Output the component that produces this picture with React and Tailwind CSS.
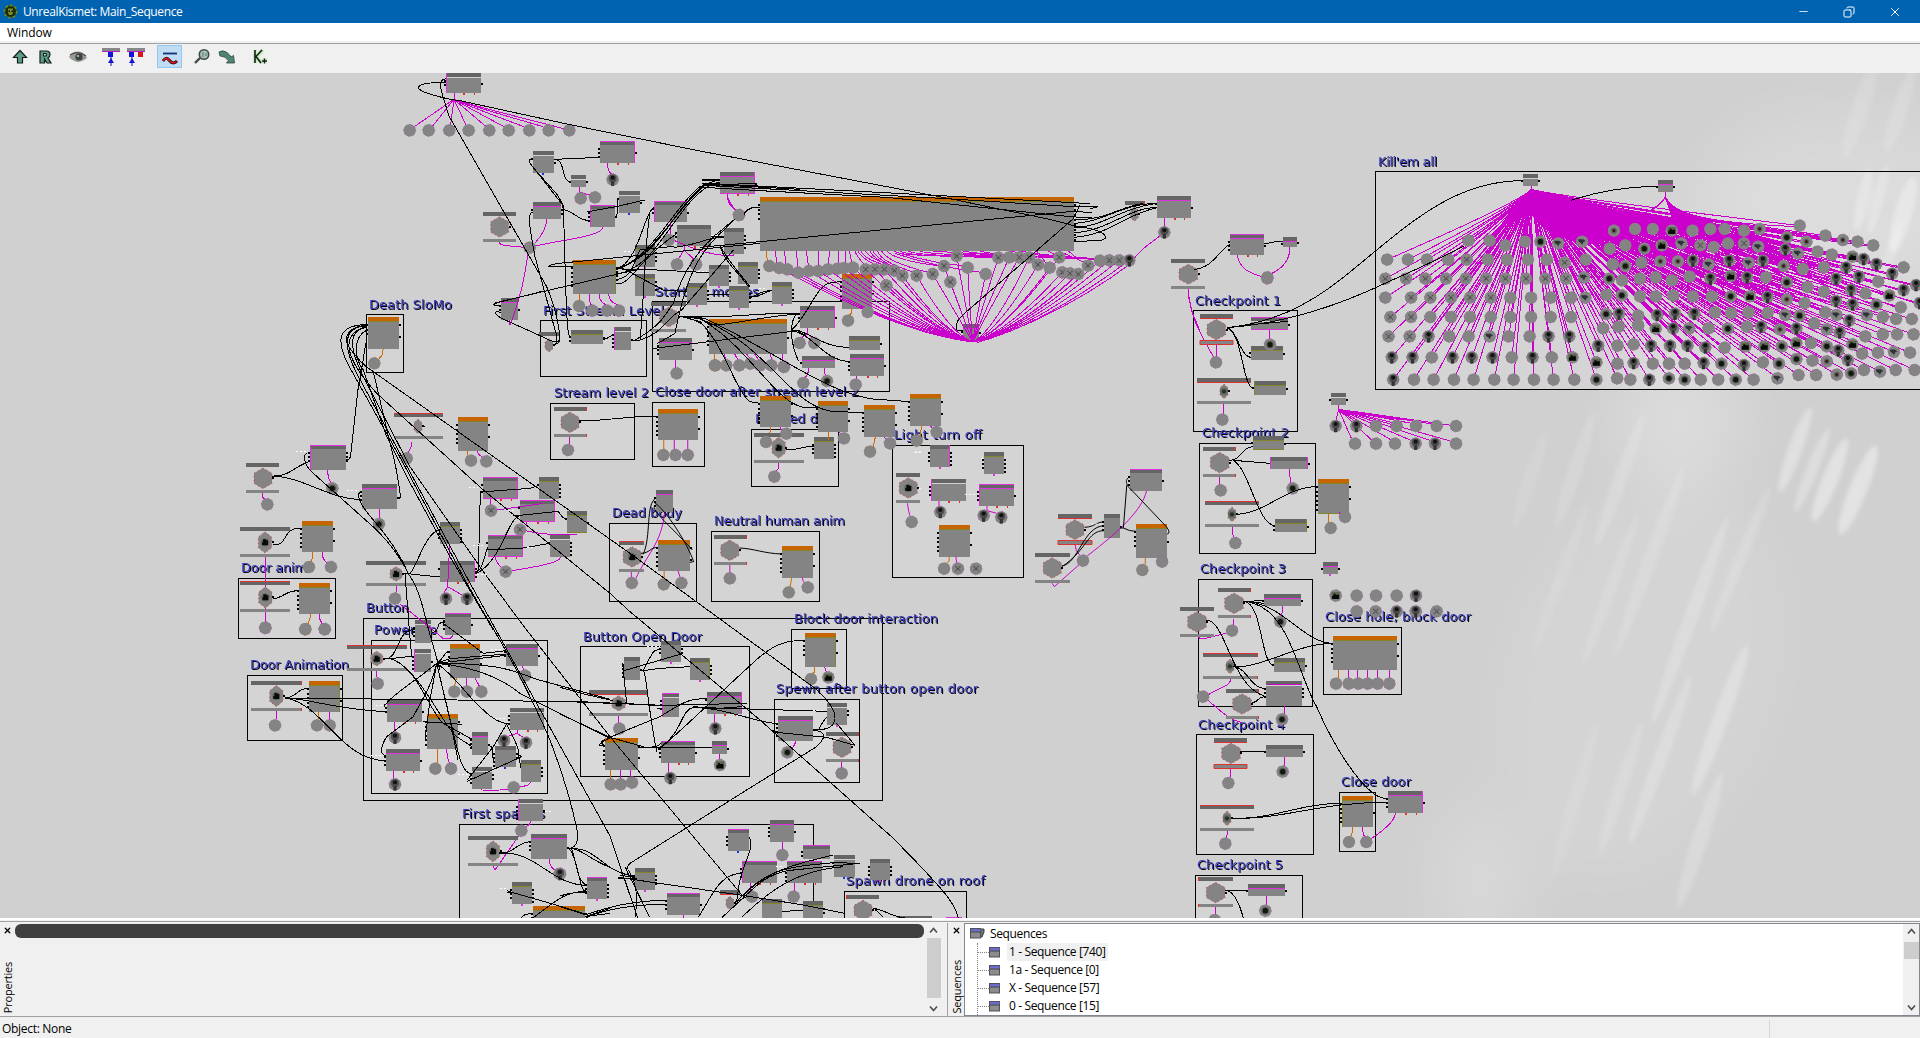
import React from "react";
import { Minus, X, Copy } from "lucide-react";

// Every section of the graph keeps its own origin (o) and units per pixel (k).
// nodes:   kind x1 y1 x2 y2 leftPorts rightPorts flags
// events:  barX1 barX2 topBarY hexX hexY hexW hexH bottomBarY flags
// dots:    x,y followed by an optional picture letter
const SECTIONS = [
  {
    o: [380, 70], k: [3, 3],
    boxes: "481 751 799 919;817 695 1529 964",
    nodes: `w 198 9 303 69 2 1 Lr;d 660 213 765 279 3 1 TRr;w 459 243 522 309 1 1 b;w 573 315 618 351 1 1;w 717 363 780 430 1 1 b;m 459 396 543 446 1 2;d 630 405 705 471 3 1 TL;d 822 393 921 456 2 1 TL;m 1020 306 1125 372 0 1 RBr;d 891 465 993 528 2 0 r;d 1032 474 1092 552 0 4;y 765 525 825 591 0 3 p;y 765 612 825 678 0 3 p;d 987 585 1047 648 0 3 p;y 1074 576 1134 642 0 3 p;y 921 639 981 705 0 3 p;y 1047 648 1107 714 0 3 p;y 1176 636 1236 702 0 3 p;o 579 570 708 672 5 4 R;m 363 684 414 750 2 1;y 573 780 669 822 2 1;w 702 771 753 840 4 1 L;m 837 804 936 870 3 1;o 987 747 1221 852 5 1`,
    events: `309 408 426 359 471 54 62 507 s;477 537 786 507 826 24 40 0 s;813 918 696 866 741 54 60 778 s`,
    dots: `89,181 146,181 208,181 266,181 328,181 386,181 448,181 506,181 568,181 602,385 645,382 698,329k 449,533 1077,435 866,510 891,583 948,583 597,708o 637,722 681,722 717,722 890,910 1005,886o 1039,886 1078,886 1111,881 1140,886 1174,886 1211,890`,
    pink: `M222 69V90M222 88L103 170M222 88L158 168M222 88L212 164M222 88L258 165M222 88L316 168M222 88Q260 110 372 170M222 88Q270 110 432 170M222 88Q280 110 490 170M222 88Q290 110 552 176M597 351V366L602 372M597 366L632 376M682 279Q682 302 694 312M500 447Q500 480 466 518M668 471C668 500 540 510 466 528M358 516C358 530 390 526 432 532M444 550C435 620 415 700 396 750L390 766L388 750M1042 372Q1042 405 1066 420M872 456V494M912 528V540L896 566M912 540L942 568M884 512C960 545 1000 556 1060 558V552M628 672Q628 700 634 705M658 672C656 695 672 700 678 705M686 672C688 700 708 700 714 706M886 870V894M1032 852L1038 870M1064 852L1074 870M1100 852L1110 866M1124 852L1136 870M1172 852L1174 870M1206 852V874`,
    orange: `M597 672V692M1004 852V870`,
    wires: `M198 37C110 37 90 54 150 72Q200 88 240 92L570 164L960 243M198 26C170 28 182 62 208 140L500 650C530 720 545 800 536 818L520 824M522 268L660 262M522 268C560 268 540 335 573 335M459 266C440 266 448 280 470 305L548 405C555 440 555 760 566 790Q568 804 573 804M459 292L530 372Q560 420 548 418M543 418C580 418 590 452 630 452M620 426L717 408L794 390M705 440C720 440 705 385 717 385M459 426C440 426 450 480 465 560L528 790Q535 820 524 824M414 708M363 708C330 708 335 700 365 694L765 600M363 728C335 718 345 738 380 752L500 806Q530 822 540 810M508 588C510 580 560 578 600 574L1140 520M505 588L579 588M708 596C760 600 770 595 830 600L987 608M708 596C840 560 870 430 970 345L1020 328M708 600C820 560 890 400 960 350L1020 336M720 596C830 550 900 400 975 346L1125 340M708 612C830 600 880 410 990 345L1020 348M708 628C760 628 765 560 780 540L870 530L891 532M708 642C760 642 760 580 891 490M708 600C780 570 790 430 822 412M720 590L850 660L921 665M753 812L780 810C790 730 795 500 810 430M780 810C850 790 850 750 905 720L1060 540M766 810C850 760 850 740 880 700Q920 560 1030 476L1060 450M669 808C690 808 685 795 702 795M993 500L1032 500M891 530C960 525 980 500 1032 502M1092 435Q1100 411 1140 411M1065 448C980 530 930 560 885 790L830 822M981 674L1047 674M1107 682C1150 680 1150 664 1176 662M1020 525C1040 570 1080 610 1110 650M900 738C950 750 980 760 987 796M815 836L1221 786L1260 780M966 330H1020M970 342L1260 358`,
    ghost: `M732 545h20M996 497h20M955 603h26M1138 655h18`,
  },
  {
    o: [700, 140], k: [3, 3],
    nodes: `o 180 171 1122 333 4 8;o 426 402 516 507 5 2;m 300 498 405 564 2 1 Rr;y 447 588 540 630 0 1;m 450 642 552 708 3 1 r;m 306 648 405 684 1 0;o 180 768 273 861 5 2;o 354 783 444 876 5 2;o 492 795 585 891 5 2;o 630 762 723 858 5 2;m 1371 168 1473 234 1 1 r;m 788 552 836 600 1 1;y 342 891 402 957 3 4;d 690 915 750 981 3 4 Rp;y 852 936 912 1002 3 4 p`,
    events: `162 312 879 236 923 40 64 961 k;1275 1335 183 1303 222 24 44 0 R;1413 1515 357 1465 403 56 60 438 s`,
    dots: `117,225 208,378o 238,384 262,388 295,398 327,393 355,393 384,388 413,386 432,384 459,383 497,388x 525,388x 553,388x 583,392x 607,407x 650,407x 698,402x 732,378x 770,348x 803,383 857,402 751,426x 559,436x 895,353x 928,352 958,352x 988,352x 1014,374x 1049,383 1078,352x 1087,397x 1110,400x 1135,402x 1164,377x 1200,362 1228,361x 1258,361x 1288,361k 1393,277k 444,542o 503,516 299,609 343,609 310,729 381,723t 467,734 198,906o 259,881 432,895 510,935o 570,910 650,902o 710,876 223,1010 45,676o 252,681`,
    pink: `M226 333L230 368M253 333L258 372M289 333L294 382M319 333L325 376M355 333L354 376M388 333L386 372M417 333L414 370M435 333L438 370M448 333L455 368M465 333Q470 350 492 372M474 333Q480 350 520 372M483 333Q490 355 550 374M497 333Q505 355 580 378M510 333Q520 360 600 392M520 333Q525 355 604 392M533 333Q540 365 640 396M545 333Q560 365 680 396M562 333Q580 360 720 378M583 333Q600 350 770 345M600 333Q620 350 900 352M625 333Q640 348 950 352M660 333Q680 345 990 350M585 340Q700 380 850 398M600 340Q700 370 800 378M730 333Q760 346 1010 352M790 333Q850 346 1080 350M840 333Q900 350 1200 358M700 333Q850 345 1220 358M930 333Q1000 350 1250 358M960 333Q1060 352 1288 360M1010 333L1040 372M1045 333L1078 352M1076 333L1160 370M1105 333L1130 354L1200 360M82 162Q84 185 105 208M1393 234V262M1380 288C1320 330 1310 345 1290 372C1120 500 930 580 830 608M322 564V580L304 594M322 580L338 594M326 684Q326 704 314 714M372 684L376 708M470 708V718M240 861Q242 872 250 876M416 876L424 882M552 891L560 900M692 858L700 870M235 966V986L226 996M1464 446Q1465 500 1500 572`,
    orange: `M198 333L202 362M453 507V520L447 526M212 861L208 890M385 876V900M526 891L520 920M665 858L660 888`,
    wires: `M0 33L770 180C950 220 1080 240 1122 258C1230 270 1240 305 1180 302L1122 305M6 118L60 120M6 130L60 132L1120 188L1170 191M10 136L740 176L1120 200L1195 200L1170 206M10 142L180 152L560 172L1110 230L1176 234M0 322L180 305L1120 214L1176 218M1140 196L1120 236L810 506C775 535 765 545 770 570L788 572M1122 250C1200 250 1270 190 1371 190M1122 264C1210 260 1260 205 1371 190M1122 278C1220 275 1290 200 1371 203M1122 292C1230 285 1270 225 1371 203M1122 240C1220 240 1260 200 1330 190M132 220C145 202 160 202 180 202M147 470C180 470 170 452 216 452M60 318C75 370 120 400 145 440M-65 528L80 529L230 520L300 520M-55 528L0 533Q30 560 60 554C140 545 220 525 300 522M275 570C330 520 350 430 395 428L426 424M275 570C330 570 360 622 447 622M275 572C340 580 370 664 450 664M290 520C260 560 280 630 296 664M275 572C300 580 310 575 322 595M-55 528C-20 530 0 530 20 538C240 640 400 780 560 780L630 785M-55 529C-20 530 0 534 20 545C220 630 280 820 420 815L492 818M-55 530L0 536C150 620 230 800 320 803L354 804M-55 530L0 545C70 610 110 760 150 785L180 790M257 930C300 930 310 918 342 918`,
    ghost: `M32 287h26M176 446h18M645 936h18M843 956h10`,
  },
  {
    o: [1360, 150], k: [2.8, 3],
    boxes: "44 65 1620 718",
    nodes: `w 456 72 498 107 1 1;m 834 90 876 125 1 1`,
    dots: `304,272 363,272 407,286 462,275 505,275t 555,280g 622,275g 711,242s 770,237 820,237 873,242b 931,242 981,237 1021,237 1075,242 1119,237s 1231,227 1195,262t 1250,275s 1303,257 1352,270s 1393,275 1437,286 699,296 743,286 796,296t 845,286b 900,280g 953,286x 990,291 1030,280 1075,280x 1115,290g 1191,298k 1226,310g 1281,305 1321,314 1379,320b 1410,327k 1446,342k 1522,352 76,329 134,329 187,329 247,329 299,329x 358,329 412,329 470,329 523,329 573,338x 632,329 708,343 743,348t 788,338 841,334s 890,334s 932,332k 976,343g 1034,332k 1088,338g 1128,332k 1186,348s 1240,357 1299,352 1361,352k 1490,371k 71,386x 129,386x 183,386x 241,386x 296,386x 353,386x 407,386x 465,386x 519,386x 577,386x 627,382g 698,386t 734,391 784,386 828,382 873,391 923,380 981,386k 1038,378b 1084,382k 1137,382 1195,397t 1253,411 1333,386k 1397,380k 1451,395 1522,420k 1557,405k 71,443 143,443x 197,443x 255,443x 308,443x 366,443x 421,443 479,443 534,443 591,443 631,443g 690,434 733,436t 784,439 828,439 877,437 932,439 985,439 1038,439t 1092,439b 1141,441k 1195,448s 1245,459 1299,425 1375,420k 1415,430 1482,436b 1333,453k 1379,463k 1446,464t 1514,472 1567,459k 85,501x 143,501x 197,501 255,501 308,501 366,501 421,501 479,501 534,501 591,501 689,492t 725,491k 779,497 832,495k 882,491k 936,491k 994,487 1039,489 1088,487 1141,489 1191,495g 1231,497t 1303,487 1334,495g 1370,511k 1419,495g 1464,501 1501,507 1545,507 80,559x 139,559x 192,559k 250,559 304,559 363,559g 416,559 475,559 528,559k 586,559k 681,535 724,530 779,526 828,536b 877,535k 922,535g 976,535 1030,536t 1083,530 1123,530k 1176,538s 1222,535k 1272,520 1307,538g 1343,547k 1415,559 1464,553 1504,553 1550,553 89,622k 147,622k 201,622 259,622k 313,622k 371,622k 425,622 483,622k 537,622 595,622b 667,587k 721,587 766,583 815,587k 868,587k 917,587k 967,592k 1021,593 1079,589b 1132,589b 1181,589t 1222,579b 1263,579 1307,589t 1339,601k 1379,583b 1406,611 1450,608 1495,606g 1540,608 662,637b 721,641 766,639k 820,641 865,641 909,641 962,639k 1012,641t 1075,645k 1128,637 1173,641t 1222,627t 1267,632 1307,634s 1366,630k 1411,660 1456,665g 1500,660 1553,660 93,689k 151,689 206,689 263,689 318,689 376,689 430,689 487,689 542,689 600,689 662,689t 720,685 757,689 810,689k 865,685t 909,689t 954,689 1003,689 1052,689t 1102,689 1169,685g 1228,675 1277,675 1335,674s 1375,670t`,
    fan: [480, 118],
    pink: `M479 107V125M854 125V150M855 140Q845 165 800 188M855 140Q845 160 815 184M855 140Q870 175 945 208M857 145Q880 180 910 205M700 190L1000 225L1190 290M870 200L1300 400M870 200L1400 420M870 200L1500 440M870 200L1200 320M870 200L1250 460M870 200L1350 350M700 230L980 380L1200 440M680 200L1050 340L1380 400M860 200L1100 400L1400 480M860 200L1030 400L1300 470M680 230L960 330L1330 430M690 235L990 350L1330 460M700 240L1000 360L1300 480M700 245L1040 390L1230 470M950 340L1200 410M960 350L1220 425M980 370L1230 445`,
    wires: `M-373 533C-250 520 -150 470 -50 385C120 240 250 92 456 92M-373 533C-200 520 -50 460 60 405C130 370 200 340 290 288M590 151C680 120 760 109 834 109`,
  },
  {
    o: [230, 290], k: [3, 3],
    boxes: "409 73 521 247;25 865 317 1045;401 985 1958 1531;961 340 1214 508",
    nodes: `o 414 81 507 177 3 2;o 684 381 774 483 5 2;d 240 465 348 540 3 3 TL;m 396 582 501 657 3 1;d 759 561 864 627 1 0 TRBr;y 927 561 987 627 1 4;d 870 630 975 696 1 0 TRBr;y 1011 663 1071 729 1 1 B;d 774 735 879 801 1 0 TRBr;w 960 735 1020 801 1 4 l;y 630 696 690 762 3 4;d 630 813 735 876 1 3 Rr;o 216 693 309 786 5 2;o 207 879 300 972 5 2;w 555 990 603 1059 3 0;d 645 969 723 1035 3 1 T`,
    events: `48 147 519 99 565 54 62 600 s;30 180 711 105 757 40 64 792 k;30 180 873 106 922 40 64 957 kT;408 588 813 498 852 36 44 879 ks;492 639 369 564 409 24 44 438 sT;972 1071 351 1020 397 54 62 432 S`,
    dots: `433,220o 307,595t 112,643 447,702t 530,505 723,512o 769,514 783,662x 870,719x 827,845x 495,926 648,926k 711,926k 237,831o 303,831 226,1018o 106,1014 284,1018 1014,480`,
    pink: `M293 540Q293 562 302 578M97 609V620L106 630M448 657V684M544 456V470L534 488M742 483Q745 496 756 500M781 627V644M800 660L940 640M890 696V706M886 722C940 735 1010 735 1042 733M795 801Q800 820 815 832M845 842C920 830 985 820 992 802M659 762L653 890L642 908M653 890Q680 905 700 918M498 888V905L495 912M276 786Q276 810 294 820M105 800V1000M267 972Q268 990 278 1004M1018 440V462M510 942C560 980 610 1020 640 1046Q665 1050 668 1035`,
    orange: `M459 177Q460 195 447 206M711 483V496M248 786V800L243 816M240 972V985L234 1002`,
    wires: `M411 104C310 104 325 165 355 225L520 520L705 870C800 1040 860 1120 960 1350Q1020 1510 1043 1630Q1045 1676 1012 1676M411 108C335 110 340 170 380 250L715 870L1140 1638L1235 1920M411 112C350 120 360 180 400 260L540 530L778 870L890 1020L1140 1340L1540 1820M411 106C345 110 340 150 360 175Q390 220 430 245L1200 790L1755 1195C1840 1270 1830 1320 1755 1320M411 110C330 130 340 200 440 310L760 600L1140 910L1200 965L1590 1290L1990 1645C2120 1780 2200 1850 2187 1920M411 120C370 140 370 200 400 240L470 440L530 560L660 800L790 1020M411 150C400 180 400 230 385 290L362 495Q360 510 348 510M430 245L480 460Q500 530 512 622Q508 626 501 626M126 558C180 560 190 530 240 514M126 558C220 560 300 630 396 628M240 488C210 486 225 530 250 550L440 720Q500 780 535 850M396 606C370 606 395 650 430 690Q500 770 535 850M130 765C180 765 150 714 216 714M130 926C160 926 160 902 207 902M518 851H540C560 830 590 720 630 720M535 851C570 855 600 860 630 859M525 850L538 1020L545 1100M535 851C570 900 580 960 596 1020L630 1140M735 846L745 840L751 606H759M740 848C765 830 765 780 774 770M745 848C820 800 830 690 870 676M751 606L900 595L927 586M850 678L985 664Q1000 690 1011 686M770 780L880 774L960 760M1048 392L1110 390L1214 381L1284 379M791 44C800 35 820 35 940 3M578 408H584`,
    ghost: `M198 485h30M350 600h36M717 592h28M875 597h16M835 660h24M730 767h36M890 772h22M740 854h36`,
  },
  {
    o: [230, 580], k: [3, 3],
    boxes: "424 181 953 640;52 287 338 482;688 733 1750 1200;1051 199 1559 590",
    nodes: `w 552 207 603 276 4 1 L;o 660 192 750 294 4 2;m 828 192 924 258 2 1;o 237 303 330 396 5 2 R;m 471 360 576 426 2 1 r;m 468 507 570 573 3 1 r;o 591 402 684 507 6 2;m 726 456 774 525 3 1;d 795 498 858 561 4 2 b;w 840 384 942 450 3 0 r;w 726 561 786 627 3 2;y 873 540 933 606 0 3;w 864 657 939 723 4 1 L;m 903 762 1011 837 3 1;y 846 906 906 972 3 4 p;d 1071 891 1131 957 3 4 Tp;o 909 978 1065 1040 2 2`,
    events: `351 531 195 440 236 36 44 264 kT;63 216 303 139 348 40 64 384 kr;714 864 768 789 814 40 64 849 k`,
    dots: `443,311 673,335o 711,335 754,335 885,287 261,436o 299,436 135,436 495,473k 495,613k 616,566o 663,566 822,482k 888,488k 851,622 874,752 989,881t 226,147o 106,143 284,147`,
    pink: `M440 272V288L443 294M710 294V318M735 294L748 318M876 258L882 270M297 396V420M139 392V418M493 426V456M490 573V596M650 507Q652 540 658 548M861 450V460L830 470M861 460L880 472M902 606Q900 618 868 620M752 627Q755 635 835 628M902 723Q900 735 888 740M866 768L795 870L789 858M957 837Q957 860 975 870`,
    orange: `M679 294L674 318M265 396V418M621 507V548`,
    wires: `M165 354C200 354 200 324 237 324M165 354L680 360L1140 367M165 354C230 354 320 390 471 395M165 354C280 370 330 542 468 542M458 235H490L552 228M475 235C510 220 500 150 555 148M475 235C560 250 600 400 640 430L726 478M475 235C560 250 640 440 680 470L726 500M603 160C640 150 610 125 645 128M640 130L760 220L828 212M620 250L660 236L828 222M620 250L828 226M620 250C650 230 640 214 660 214M620 250C560 300 480 350 470 370Q455 380 471 383M620 250C600 330 580 350 550 410L470 470Q440 520 468 528M620 250L600 360L585 480M620 250C800 250 850 270 920 298L1140 358M620 250C740 260 820 300 870 340L1140 475M620 250C680 290 720 360 760 390Q800 430 840 432M620 250L680 500C690 540 700 580 726 582M620 250L660 420L684 540M580 425L695 433M830 432L790 500L712 600M830 432C850 480 870 500 866 530L873 565M774 498C800 490 780 545 795 545M858 520L875 530L720 600L712 604M808 818C850 825 860 785 903 785M808 820C920 810 960 915 1071 916M1011 806C1050 800 1080 840 1140 862M1018 806C1040 830 1045 900 1060 930L1071 935M906 1015C960 980 1000 930 1071 935M830 932C850 940 920 955 1075 1005M1065 1010L1140 985M1065 1010L1140 1000M870 1018Q880 1000 909 1000M846 938H830M1120 495C1108 485 1120 480 1126 478`,
    ghost: `M615 210h36M783 208h30M438 375h20M424 525h32M683 582h32M795 414h36M810 925h18M945 695h22`,
  },
  {
    o: [560, 600], k: [3, 3],
    boxes: "695 88 860 264;643 298 899 547;853 875 1220 1120",
    nodes: `o 735 99 828 201 4 2 R;d 303 123 363 186 2 2 p;d 192 171 240 240 4 1;y 390 174 450 240 0 3 Rp;w 306 279 357 351 3 0 TL;m 441 276 546 342 1 0 Rr;o 135 414 234 510 5 2;d 303 423 405 489 3 1 Tr;m 456 423 501 462 0 1;m 654 348 759 423 4 1;w 801 309 861 375 0 2 p;m 630 660 702 726 3 1;d 504 687 567 753 3 0 Tb;d 546 783 651 849 3 0 TLr;d 681 783 786 849 4 0 Tr;d 729 735 810 777 2 0 T;w 822 765 885 831 2 0 b;d 930 777 990 840 3 3 p;y 225 804 285 870 3 3 p;d 321 879 420 945 3 1 T;y 606 897 666 960 0 0;y 729 903 789 960 0 2;d 1012 948 1116 970 0 0;d 1158 951 1206 970 0 0 T`,
    events: `87 264 270 176 310 40 46 339 kB;798 897 396 846 442 54 62 477 r;480 540 870 510 909 24 40 0 B;858 957 885 909 931 54 60 990 L`,
    dots: `753,237o 805,232b 178,386 466,385k 152,553o 182,553 216,548 331,534k 480,495b 682,457t 845,520 667,765 576,890 701,890 0,822k`,
    pink: `M175 348V370M464 342V370M181 510V538M213 510L212 532M326 489V518M478 462V480M706 423Q706 438 694 444M794 201L800 218M845 486V504M666 726V748M571 849V874M703 849V874M371 945V960`,
    orange: `M152 510V536M764 201V215L757 224`,
    wires: `M0 262C60 280 100 290 160 302M195 310L306 318M0 304L310 316L562 310M0 342L150 412L260 443H456M234 442C280 440 290 445 303 430M116 436C130 420 150 410 300 350C380 300 390 296 441 296M135 437H118M290 455C260 300 260 220 250 212L300 205L390 200M250 212C290 130 280 160 303 144M192 212L188 190L200 310M192 212L370 160H364M295 450C400 360 520 240 600 170C660 120 700 122 735 121M295 445C370 400 360 330 400 322L801 334M400 322C500 325 560 360 654 372M546 320C400 330 520 328 400 320M290 326H306M640 396L800 412L885 436M654 400L640 392M776 390C790 360 800 350 801 352M830 370L885 436M759 390C800 395 800 410 770 440L560 570L210 790Q190 810 210 830M21 746H35C110 740 130 820 225 828M35 746C50 790 50 840 81 858M0 888Q40 875 81 877M205 810Q240 860 225 950M195 800L268 950M175 832L560 888L730 915L853 940M180 826L225 832M175 834H230M320 900C200 905 150 920 75 945M320 912C200 915 140 930 80 950M0 920L90 948L75 955M567 712C590 740 540 800 535 870L530 905M415 952C460 880 480 820 546 820M486 952C580 870 600 830 681 812M525 908C600 840 620 810 820 765M530 905C620 800 700 800 822 788L900 790L681 812M545 952C640 860 720 810 850 800M560 890L530 905M666 935L729 930M938 925C980 930 990 950 1040 955M945 928L968 950`,
    ghost: `M262 140h38M345 195h34M636 366h14M760 330h36M648 800h18`,
  },
  {
    o: [540, 370], k: [2.3758, 3],
    boxes: "267 98 391 289;502 179 709 349;837 227 1149 622;165 461 372 694;408 485 664 694",
    nodes: `o 280 117 375 210 5 2;o 948 465 1022 560 5 2;o 280 510 356 603 5 2;o 575 528 649 623 5 2;m 276 360 316 426 3 0;w 929 327 1012 393 3 0 Lr;m 1043 342 1126 408 3 1 TLr;d 1402 297 1478 363 3 1 T;d 1340 432 1378 504 3 1;o 1416 462 1490 563 4 1`,
    events: `188 247 513 219 561 43 62 598 kT;413 491 495 451 541 43 62 577 r;846 903 309 875 354 43 62 391 ks;1231 1311 432 1271 479 43 60 514 A;1176 1259 549 1217 594 43 62 631 s`,
    dots: `293,255o 322,255 351,255 218,639 294,643o 336,639 451,625 591,667o 636,652 883,456 951,426k 1054,437k 1096,442k 960,596o 993,596x 1036,596x 1290,572 1431,600o 1478,575`,
    pink: `M319 210V240M351 210V240M217 606V624M328 603L334 626M451 585V610M623 623Q624 638 632 642M873 400Q876 430 880 440M948 393V410M1062 408V422L1085 430M988 560L990 580M1468 563L1474 566M296 426C290 520 250 560 228 625M1441 363C1430 420 1380 480 1300 558M1280 585L1222 650L1217 640M1271 523Q1272 545 1282 555`,
    orange: `M294 210V240M295 603V628M598 623L594 652M972 560V574L964 582M1438 563V584`,
    wires: `M240 550C260 550 262 532 280 532M245 553C265 500 250 400 276 384M276 405C255 410 310 470 340 510L362 540M270 396C300 420 350 520 365 575L356 577M474 534C510 536 530 550 575 552M1294 472C1320 470 1320 456 1340 456M1240 588C1280 580 1290 470 1340 467M1240 590C1300 540 1300 482 1340 482M1378 474H1386L1394 346M1386 474Q1400 484 1416 484M1402 320C1385 330 1395 350 1410 366L1488 470Q1500 490 1490 492M1402 346H1394`,
    ghost: `M890 246h14M900 356h8M1010 373h28M1310 462h28`,
  },
  {
    o: [1150, 280], k: [3, 3],
    boxes: "130 91 443 455;149 490 497 821;146 898 488 1278",
    nodes: `w 303 111 413 150 0 1 TB;y 303 198 399 240 1 1;y 312 303 408 345 1 1 L;y 309 468 402 510 1 1 B;d 360 531 474 567 0 1 LR;y 375 717 471 756 2 1 R;o 504 597 597 702 6 2 B;w 543 339 588 375 1 1;m 519 846 564 882 1 1 p;m 342 942 453 978 1 1`,
    events: `150 249 102 199 149 56 62 183 A;141 303 294 222 334 24 44 363 tB;159 258 501 209 548 56 62 582 S;165 327 663 246 703 24 44 732 tT;204 303 924 252 970 56 62 1005 r;90 192 981 141 1026 56 62 1062`,
    dots: `198,247 360,194t 217,419 212,631 428,625t 256,789 542,744o 585,711 557,438k 619,438k 678,438 740,438 798,438 860,438 918,438 615,491 678,491 735,491 797,491k 855,491k 918,491 557,947b 620,947 678,947 740,947 798,947k 352,-5t`,
    pink: `M199 192V230M359 150V176M221 372V402M209 590V614M417 567L422 608M246 740L250 772M566 697L576 704M566 375V395M566 388L557 424M566 388L612 422M566 388L604 475M566 388L665 480M566 388L670 424M566 388L724 480M566 388L728 428M566 388L785 482M566 388L784 430M566 388L842 482M566 388L846 432M566 388L904 484M566 388L904 436M566 392L760 420M114 28C125 120 140 140 190 230`,
    orange: `M534 702V728`,
    wires: `M230 143C260 145 270 230 303 232M230 143C280 160 275 320 312 326M230 143L303 134L413 124M238 541C275 541 275 500 309 500M250 541L360 550M250 541C300 570 320 730 375 738M258 703C350 700 400 622 504 619`,
  },
  {
    o: [1210, 225], k: [3, 3],
    nodes: `m 60 27 163 90 3 1 Tr;m 220 36 262 65 1 1`,
    dots: `172,157`,
    pink: `M82 90C90 140 130 145 158 156M240 66Q240 120 184 146`,
    wires: `M163 55C190 55 190 48 220 48M-48 133C10 130 30 70 60 58`,
  },
  {
    o: [1150, 540], k: [3, 3],
    boxes: "520 262 755 463;140 583 491 943;568 758 677 935;136 1006 458 1300",
    nodes: `o 549 288 741 390 5 2;y 372 354 465 396 1 1;w 348 423 456 498 3 3;d 348 615 459 651 1 1;o 576 768 669 861 5 1 L;m 714 753 819 819 3 1 Rr;m 294 1032 405 1068 1 1`,
    events: `159 324 339 240 379 24 44 408 tTr;228 327 447 276 492 56 62 528 r;192 291 594 243 640 56 62 675 AB;150 312 795 231 835 24 44 864 tT;144 249 1011 197 1058 56 62 1092 L`,
    dots: `391,245t 246,272 159,470 396,538t 235,729 398,695t 226,911 597,906o 649,906 558,431o 596,431 625,431 653,431 683,431 718,431 346,1112t 194,1140 620,214 677,214x 740,214k 797,214k 860,214x`,
    pink: `M397 198V216L392 228M250 236V254M145 290C150 305 180 290 228 280M242 418C242 440 190 450 175 465M175 482C220 520 240 540 275 548M402 498V522M240 684V712M402 651V678M231 872V885L228 894M349 1068V1094M196 1100V1122M736 820C735 845 690 880 662 896M638 861Q638 885 645 890M595 390V414M624 390L622 414M652 390V414M682 390V414M718 390V414M355 434H456`,
    orange: `M566 390L565 414M608 861V875L602 890`,
    wires: `M280 184L342 182M285 184L342 190M285 184C340 200 330 370 372 376M285 184C400 190 460 310 549 310M285 184C420 200 440 400 500 500C560 640 630 730 670 760Q690 776 714 776M168 240C230 240 240 440 348 470M250 380C340 385 440 310 549 310M250 380C290 380 300 446 348 446M302 490C330 485 320 470 348 470M270 634H348M244 836C380 836 450 790 576 790M244 836C420 836 500 787 714 787M225 1052H294M232 1052Q260 1060 280 1134`,
  },
];

const LABELS = [
  ["Kill'em all", 1378, 166, 59],
  ["Death SloMo", 369, 309, 83],
  ["First Stream Level", 543, 315, 121],
  ["Starting monies", 655, 296, 104],
  ["Stream level 2", 554, 397, 95],
  ["Close door after stream level 2", 655, 396, 204],
  ["Blocked door", 755, 423, 84],
  ["Light turn off", 894, 439, 88],
  ["Dead body", 612, 517, 70],
  ["Neutral human anim", 714, 525, 131],
  ["Door anim", 241, 572, 66],
  ["Button", 366, 612, 43],
  ["Power up", 374, 634, 63],
  ["Door Animation", 250, 669, 99],
  ["Button Open Door", 583, 641, 119],
  ["Block door interaction", 794, 623, 144],
  ["Spewn after button open door", 776, 693, 202],
  ["First spawns", 462, 818, 83],
  ["Spawn drone on roof", 846, 885, 139],
  ["Checkpoint 1", 1195, 305, 86],
  ["Checkpoint 2", 1202, 437, 87],
  ["Checkpoint 3", 1200, 573, 86],
  ["Checkpoint 4", 1198, 729, 87],
  ["Checkpoint 5", 1197, 869, 86],
  ["Close hole, block door", 1325, 621, 146],
  ["Close door", 1341, 786, 70],
];

const rows = (s) => (s ? s.trim().split(";").map((r) => r.trim().split(" ")) : []);
const R = Math.round;
const F = Math.floor;

function Node({ s, d }) {
  const [kind, a, b, c, e, l, r, flags = ""] = d;
  const px = (v) => R(s.o[0] + v / s.k[0]);
  const py = (v) => R(s.o[1] + v / s.k[1]);
  const x = px(+a), y = py(+b), w = px(+c) - x, h = py(+e) - y;
  const edge = kind === "y" || kind === "o" ? "#84842a" : "#e030e0";
  const div = { m: "#e030e0", y: "#84842a", w: "#d0d0d0", o: "#84842a" }[kind];
  const top = kind === "o" ? "#c66400" : "#656565";
  const ports = [];
  const sp = h > 29 ? 4.5 : 4;
  for (let i = 0; i < +l; i++) ports.push([x - 2, R(y + (h < 15 ? 6 : 7) + i * sp)]);
  for (let i = 0; i < +r; i++) {
    const step = kind === "o" && +r < 3 ? 12 : h > 40 ? 5 : 4;
    ports.push([x + w, R(y + (+r === 1 ? h / 2 : 7) + i * step)]);
  }
  return (
    <g>
      <rect x={x} y={y} width={w} height={h} fill="#848484" />
      <rect x={x} y={y} width={w} height={4} fill={top} />
      {div && <rect x={x} y={y + 4} width={w} height={1} fill={div} />}
      {flags.includes("T") && <rect x={x} y={y} width={w} height={1} fill={edge} />}
      {flags.includes("B") && <rect x={x} y={y + h - 1} width={w} height={1} fill={edge} />}
      {flags.includes("L") && <rect x={x} y={y} width={1} height={h} fill={edge} />}
      {flags.includes("R") && <rect x={x + w - 1} y={y} width={1} height={h} fill={edge} />}
      {ports.map((p, i) => (
        <rect key={i} x={p[0]} y={p[1]} width="2" height="2" fill="#000" />
      ))}
      {flags.includes("r") && <path d={`M${F(x + w / 2)} ${y + h}h2v2h-2zM${F(x + w * 0.8)} ${y + h}h1v2h-1z`} fill="#e03020" />}
      {flags.includes("b") && <rect x={F(x + w / 2) - 1} y={y + h} width="2" height="2" fill="#2030e0" />}
      {flags.includes("p") && <rect x={F(x + w / 2) - 1} y={y + h} width="2" height="2" fill="#e030e0" />}
    </g>
  );
}

function Event({ s, d }) {
  const f = d[8] || "";
  const px = (v) => R(s.o[0] + v / s.k[0]);
  const py = (v) => R(s.o[1] + v / s.k[1]);
  const x1 = px(+d[0]), x2 = px(+d[1]), ty = py(+d[2]);
  const cx = s.o[0] + d[3] / s.k[0], cy = s.o[1] + d[4] / s.k[1];
  const hw = d[5] / s.k[0] / 2, hh = d[6] / s.k[1] / 2;
  const by = +d[7] ? py(+d[7]) : 0;
  const red = "#e03030";
  const pts = [[0, -hh], [hw, -hh / 2], [hw, hh / 2], [0, hh], [-hw, hh / 2], [-hw, -hh / 2]]
    .map(([p, q]) => `${cx + p},${cy + q}`).join(" ");
  return (
    <g>
      <rect x={x1} y={ty} width={x2 - x1} height="4" fill="#656565" />
      {by > 0 && <rect x={x1} y={by} width={x2 - x1} height="3" fill="#848484" />}
      {f.includes("T") && <rect x={x1} y={ty} width={x2 - x1} height="1" fill={red} />}
      {(f.includes("A") || f.includes("B")) && <rect x={x1} y={ty + 4} width={x2 - x1} height="1" fill={red} />}
      {f.includes("A") && <path d={`M${x1} ${by - 0.5}H${x2}V${by + 3.5}H${x1}Z`} fill="none" stroke={red} />}
      {/[rRS]/.test(f) && <rect x={x2 - 1} y={ty} width="1" height="4" fill={red} />}
      {/[rS]/.test(f) && by > 0 && <rect x={x2 - 1} y={by} width="1" height="3" fill={red} />}
      {f.includes("L") && <path d={`M${x1} ${ty}h1v4h-1zM${x1} ${by}h1v3h-1z`} fill={red} />}
      <polygon points={pts} fill="#848484" stroke={red} strokeWidth="0.9" strokeDasharray="1 3" />
      {/[kt]/.test(f) && <circle cx={cx} cy={cy} r="4.2" fill="#686a66" />}
      {f.includes("k") && <path d={`M${cx - 3} ${cy}v3h6v-5h-2v-1h-3v3z`} fill="#080c06" />}
      {f.includes("t") && <circle cx={cx} cy={cy} r="2.2" fill="#2a3624" />}
      <rect x={R(cx + hw)} y={R(cy) - 1} width="2" height="2" fill="#000" />
    </g>
  );
}

function Dot({ x, y, t }) {
  const ring = t === "o" ? "#d87010" : "#e020e0";
  return (
    <g transform={`translate(${x} ${y})`}>
      <circle r="6.1" fill="#848484" stroke={ring} strokeWidth="0.8" strokeDasharray="0.8 3.99" />
      <circle r="5.9" fill="#848484" />
      {t === "x" && <path d="M-2.5 -2.5L2.5 2.5M2.5 -2.5L-2.5 2.5" stroke="#4c4c4c" strokeWidth="1.2" strokeDasharray="1.5 0.6" />}
      {t === "k" && (
        <>
          <circle cy="-1.2" r="4" fill="#4e4e4e" />
          <circle cy="-2" r="2.1" fill="#111" />
          <rect x="-1.6" y="1.8" width="3.2" height="4.4" fill="#333" />
        </>
      )}
      {t === "t" && (
        <>
          <circle r="3.8" fill="#5a5c58" />
          <circle r="2.6" fill="#10180e" />
        </>
      )}
      {t === "s" && <circle r="2.8" fill="#625c5a" />}
      {t === "s" && <circle r="1.4" fill="#2c1812" />}
      {t === "g" && <path d="M-4 -2.5H1L3.5 -0.5 1.5 0 0 3-1.5 1-3.5 0z" fill="#2c3238" />}
      {t === "b" && (
        <>
          <rect x="-4" y="-3.6" width="8" height="7" fill="#5c6450" />
          <path d="M-3.6 0h1.5v-2h2v1h3.5v4.4h-7z" fill="#060a04" />
        </>
      )}
    </g>
  );
}

const dotsOf = (s) =>
  s.dots.trim().split(/\s+/).map((t) => {
    const m = t.match(/^(-?[\d.]+),(-?[\d.]+)(\w?)$/);
    return [+m[1], +m[2], m[3]];
  });

// Wires that spread from the "Kill'em all" object lists.
const spray = (s) =>
  s.fan
    ? dotsOf(s).map(([x, y]) => {
        const [fx, fy] = s.fan;
        const cx = fx + (x - fx) * 0.1;
        const cy = fy + Math.min(70, (y - fy) * 0.2);
        const main = `M${fx} ${fy}Q${cx} ${cy} ${x} ${y}`;
        return x > 930 && y < 480 ? `${main}M858 150Q${880} 215 ${x - 6} ${y + 3}` : main;
      }).join("")
    : "";

// Wires that gather below the wide matinee.
const gather = dotsOf(SECTIONS[1]).slice(2, 39)
  .map(([x, y]) => `M${x} ${y}Q${x + (815 - x) * 0.62} ${y + (606 - y) * (Math.abs(x - 815) > 150 ? 0.88 : 0.6)} 818 606`)
  .join("");

function Wires({ s, d, color, dash }) {
  if (!d) return null;
  return (
    <g transform={`translate(${s.o[0]} ${s.o[1]}) scale(${1 / s.k[0]} ${1 / s.k[1]})`}>
      <path d={d} fill="none" stroke={color} strokeWidth="1" strokeDasharray={dash} vectorEffect="non-scaling-stroke" shapeRendering="crispEdges" />
    </g>
  );
}

// Soft scribbles of the backdrop: x, y, half width, half height, tilt, opacity.
const STREAKS = [
  [1530, 480, 7, 50, 18, 0.1], [1575, 470, 7, 60, 18, 0.14],
  [1620, 480, 7, 70, 20, 0.16], [1560, 580, 6, 80, 20, 0.1], [1610, 590, 6, 80, 20, 0.13],
  [1650, 560, 7, 100, 20, 0.15], [1690, 620, 7, 110, 20, 0.2], [1720, 720, 8, 80, 20, 0.26],
  [1740, 560, 6, 80, 22, 0.16], [1660, 760, 7, 90, 20, 0.2], [1620, 790, 7, 70, 18, 0.14],
  [1575, 800, 7, 80, 16, 0.1], [1795, 450, 7, 45, 20, 0.34], [1812, 470, 6, 45, 22, 0.28],
  [1830, 480, 8, 45, 22, 0.38], [1858, 490, 9, 48, 22, 0.4], [1700, 840, 8, 70, 18, 0.2],
  [1863, 200, 7, 32, 12, 0.26], [1878, 200, 6, 36, 14, 0.24], [1903, 215, 9, 40, 16, 0.34],
  [1885, 270, 6, 50, 18, 0.18], [1860, 110, 9, 50, 18, 0.14], [1900, 110, 8, 44, 18, 0.16],
];

function Graph() {
  const S = SECTIONS;
  return (
    <svg className="block" width="1920" height="845" viewBox="0 73 1920 845">
      <rect y="73" width="1920" height="845" fill="#d0d0d0" />
      <g className="blur-[30px]" fill="#fff">
        <ellipse cx="1850" cy="200" rx="150" ry="90" opacity="0.18" />
        <ellipse cx="1680" cy="420" rx="60" ry="70" opacity="0.25" />
        <ellipse cx="1640" cy="680" rx="130" ry="200" opacity="0.1" transform="rotate(20 1640 680)" />
        <ellipse cx="1480" cy="880" rx="40" ry="70" opacity="0.2" />
      </g>
      <g className="blur-[2px]">
        {STREAKS.map(([x, y, rx, ry, a, o], i) => (
          <ellipse key={i} cx={x} cy={y} rx={rx} ry={ry} transform={`rotate(${a} ${x} ${y})`} fill="#fff" opacity={o} />
        ))}
      </g>
      {S.map((s, i) =>
        rows(s.boxes).map((b, j) => {
          const x = F(s.o[0] + b[0] / s.k[0]) + 0.5, y = F(s.o[1] + b[1] / s.k[1]) + 0.5;
          const x2 = F(s.o[0] + b[2] / s.k[0]) + 0.5, y2 = F(s.o[1] + b[3] / s.k[1]) + 0.5;
          return (
            <rect key={i + "-" + j} x={x} y={y} width={x2 - x} height={y2 - y} fill="#fff" fillOpacity="0.1" stroke="#000" />
          );
        })
      )}
      <g className="[filter:drop-shadow(1px_1px_0_#000)]" fill="#3a3ac0" fontSize="13" fontFamily='"DejaVu Sans", Verdana, sans-serif'>
        {LABELS.map(([t, x, y, w]) => (
          <text key={t} x={x} y={y} textLength={w}>{t}</text>
        ))}
      </g>
      {S.map((s, i) => rows(s.nodes).map((d, j) => <Node key={i + "-" + j} s={s} d={d} />))}
      {S.map((s, i) => <Wires key={i} s={s} d={spray(s)} color="#cc00cc" />)}
      <Wires s={S[1]} d={gather} color="#cc00cc" />
      <g fill="#cc00cc" transform="translate(1360 150) scale(0.35714 0.33333)">
        <path d="M480 118L455 160 430 205 470 200 480 195 500 220 560 262 640 285 700 262 900 240 1000 225 860 200 650 168 520 135Z" />
      </g>
      {S.map((s, i) => <Wires key={i} s={s} d={s.pink} color="#cc00cc" />)}
      {S.map((s, i) => <Wires key={i} s={s} d={s.orange} color="#d06a00" />)}
      {S.map((s, i) => rows(s.events).map((d, j) => <Event key={i + "-" + j} s={s} d={d} />))}
      {S.map((s, i) =>
        dotsOf(s).map(([x, y, t], j) => <Dot key={i + "-" + j} x={s.o[0] + x / s.k[0]} y={s.o[1] + y / s.k[1]} t={t} />)
      )}
      {S.map((s, i) => <Wires key={i} s={s} d={s.wires} color="#000" />)}
      {S.map((s, i) => <Wires key={i} s={s} d={s.ghost} color="#fff" dash="2 2" />)}
    </svg>
  );
}

function Toolbar() {
  return (
    <div className="flex h-[29px] shrink-0 items-start bg-[#f0f0f0]">
      <svg className="block" width="290" height="28" viewBox="0 44 290 28">
        <path d="M20 50.500L26.500 57.500H22.500V63H17.500V57.500H13.500Z" fill="#5f9c88" stroke="#10201c" strokeWidth="1.2" />
        <path d="M40 63V51H46.5Q50 51 50 54.500Q50 57 48 58L51 63H47L44.500 59V63Z M43.500 53.500V56H46Q47 55 46 53.500Z" fillRule="evenodd" fill="#5f9c88" stroke="#10201c" strokeWidth="1.2" />
        <path d="M69 57Q72 51 79 51.500Q85 53 87 58Q82 62 77 62Q71 60 69 57Z" fill="#9a9a94" />
        <path d="M70 55Q78 50 86 56" fill="none" stroke="#55554f" strokeWidth="1.4" />
        <circle cx="79" cy="57" r="3.6" fill="#38443e" />
        <circle cx="78" cy="56" r="1" fill="#ccd4cc" />
        <path d="M102 49.500h18M127 49.500h18" stroke="#888" strokeWidth="3" />
        <path d="M102 51.500h18M127 51.500h18" stroke="#b020c0" strokeWidth="1" />
        <path d="M108 52h5v5h-5zM129 52h5v5h-5z" fill="#1414d8" />
        <path d="M138 52h5v5h-5z" fill="#d81818" />
        <path d="M111 57v9M132 57v9" stroke="#1414a8" />
        <path d="M111 58l3 5h-6zM132 58l3 5h-6z" fill="#1414d8" />
        <rect x="157.500" y="45.500" width="24" height="22" fill="#c0dcf3" stroke="#90c8f6" />
        <path d="M163 53.500h14" stroke="#10307c" strokeWidth="1.8" />
        <path d="M163 61Q166 56 169.500 60.500T177 61" fill="none" stroke="#100808" strokeWidth="3" />
        <path d="M163 61Q166 56 169.500 60.500T177 61" fill="none" stroke="#e01020" strokeWidth="1.6" />
        <path d="M200 58L195 63" stroke="#3c4a48" strokeWidth="2.4" />
        <circle cx="204" cy="54.500" r="4.700" fill="#a9c2bc" stroke="#3c4a48" strokeWidth="1.6" />
        <path d="M203 52v5M206 53v3" stroke="#587068" />
        <path d="M219 52Q223 49.500 227 52.500Q230 55 231 57L233.500 55.500 234.500 63 226.500 63 228.500 60.500Q225 56 220 56Z" fill="#4f8474" stroke="#28443c" strokeWidth="0.8" />
        <path d="M255 50V63M263 50L256 57L262 63M262 60.500h5M264.500 58v5" fill="none" stroke="#c8ecc0" strokeWidth="4" />
        <path d="M255 50V63M262 50L256 56.500L261 63" fill="none" stroke="#102010" strokeWidth="1.600" />
        <path d="M262 61h5M264.500 58.500v5" stroke="#102010" strokeWidth="1.400" />
      </svg>
    </div>
  );
}

function Chevron({ down }) {
  return (
    <svg className="block" width="15" height="15" viewBox="0 0 15 15">
      <path d={down ? "M4 5.500l3.500 4 3.500-4" : "M4 9.500l3.500-4 3.500 4"} fill="none" stroke="#505050" strokeWidth="1.700" />
    </svg>
  );
}

function FolderIcon({ root }) {
  return (
    <svg className="block shrink-0" width={root ? 15 : 12} height="11" viewBox={root ? "0 0 15 11" : "0 0 12 11"}>
      {root && <path d="M9 1h5v3l-2 5H9z" fill="#707070" stroke="#404040" />}
      <rect x="0.500" y="0.500" width="10" height="9.500" fill="#8c8c8c" stroke="#505058" />
      <rect x="1" y="1" width="9.500" height="2.500" fill="#6c6cd0" />
      <path d="M1 4h10" stroke="#404050" />
    </svg>
  );
}

function VerticalName({ text }) {
  return <span className="rotate-180 text-[11px] leading-[12px] tracking-[-0.2px] whitespace-nowrap [writing-mode:vertical-rl]">{text}</span>;
}

const SEQUENCES = ["1 - Sequence [740]", "1a - Sequence [0]", "X - Sequence [57]", "0 - Sequence [15]"];

export default function App() {
  return (
    <div className="flex h-[1038px] w-[1920px] flex-col overflow-hidden bg-[#f0f0f0] font-['Open_Sans','Noto_Sans',sans-serif] text-[12px] text-black">
      <header className="flex h-[23px] shrink-0 items-center bg-[#0063b1] text-white">
        <svg className="ml-[3px] block" width="15" height="15" viewBox="0 0 15 15">
          <circle cx="7.500" cy="7.500" r="6" fill="#3c5010" stroke="#6f8c14" strokeWidth="2" strokeDasharray="2.500 2" />
          <circle cx="7.500" cy="7.500" r="5.300" fill="#1c280a" />
          <path d="M5 4.500h5v4l-1 2.500H6L5 8.500z" fill="#768e28" />
          <path d="M5.500 6.500h1.500v1.500H5.500zM8.500 6.500H10v1.500H8.500z" fill="#0c1404" />
        </svg>
        <span className="ml-[5px] pt-[1px] tracking-[-0.38px]">UnrealKismet: Main_Sequence</span>
        <div className="ml-auto flex items-center">
          <Minus className="mr-[33px]" size={13} strokeWidth={1.5} />
          <Copy className="mr-[33px] -scale-x-100" size={12} strokeWidth={2} />
          <X className="mr-[18px]" size={14} strokeWidth={1.7} />
        </div>
      </header>
      <nav className="flex h-[18px] shrink-0 items-center bg-white pt-[2px] pl-[7px]">
        <span className="tracking-[-0.1px]">Window</span>
      </nav>
      <div className="h-[3px] shrink-0 border-b border-[#a0a0a0] bg-[#f0f0f0]" />
      <Toolbar />
      <main className="h-[845px] shrink-0 overflow-hidden">
        <Graph />
      </main>
      <div className="h-[5px] shrink-0 border-t-2 border-white bg-[#f0f0f0]">
        <div className="mt-[1px] h-px bg-[#a0a0a0]" />
      </div>
      <section className="flex h-[93px] shrink-0">
        <div className="flex w-[948px] border-r border-[#a0a0a0]">
          <div className="flex w-[15px] flex-col items-center justify-between pt-[3px] pb-[3px]">
            <X size={9} strokeWidth={3.5} />
            <VerticalName text="Properties" />
          </div>
          <div className="mt-[1px] h-[14px] w-[909px] rounded-[6px] bg-[#404040]" />
          <div className="ml-[2px] flex w-[15px] flex-col items-center">
            <Chevron />
            <div className="h-[60px] w-[14px] bg-[#cdcdcd]" />
            <div className="mt-auto">
              <Chevron down />
            </div>
          </div>
        </div>
        <div className="flex w-[16px] flex-col items-center justify-between pt-[3px] pb-[3px] pl-[1px]">
          <X size={9} strokeWidth={3.5} />
          <VerticalName text="Sequences" />
        </div>
        <div className="flex flex-1 justify-between border border-[#828790] bg-white">
          <div className="pl-[5px]">
            <div className="flex h-[19px] items-center gap-[5px]">
              <FolderIcon root />
              <span className="pt-[1px] tracking-[-0.36px]">Sequences</span>
            </div>
            <div className="ml-[7px] border-l border-dotted border-[#808080]">
              {SEQUENCES.map((t, i) => (
                <div key={t} className="flex h-[18px] items-center">
                  <span className="w-[11px] border-t border-dotted border-[#808080]" />
                  <FolderIcon />
                  <span className={i === 0 ? "ml-[6px] h-[18px] bg-[#f0f0f0] px-[2px] leading-[18px] tracking-[-0.36px]" : "ml-[6px] h-[18px] px-[2px] leading-[18px] tracking-[-0.36px]"}>{t}</span>
                </div>
              ))}
            </div>
          </div>
          <div className="flex w-[16px] flex-col items-center justify-between bg-[#f0f0f0]">
            <div>
              <Chevron />
              <div className="mt-[3px] h-[17px] w-[15px] bg-[#cdcdcd]" />
            </div>
            <Chevron down />
          </div>
        </div>
      </section>
      <footer className="flex h-[22px] shrink-0 items-center border-t border-[#a0a0a0] pt-[3px] pl-[2px]">
        <span className="w-[1767px] tracking-[-0.3px]">Object: None</span>
        <span className="h-[18px] w-px bg-[#d7d7d7]" />
      </footer>
    </div>
  );
}
